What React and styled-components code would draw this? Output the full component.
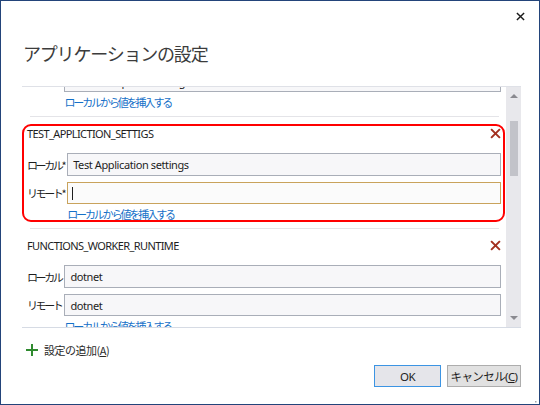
import React, { useLayoutEffect, useRef } from 'react';
import styled, { createGlobalStyle } from 'styled-components';

const GlobalStyle = createGlobalStyle`
  html, body {
    margin: 0;
    padding: 0;
    background: #ffffff;
  }
  body {
    font-family: "Noto Sans", "Noto Sans CJK JP", sans-serif;
  }
`;

const Dialog = styled.div`
  position: relative;
  width: 540px;
  height: 405px;
  box-sizing: border-box;
  border: 1px solid #23447a;
  background: #ffffff;
  display: flex;
  flex-direction: column;
  overflow: hidden;
`;

const TopBar = styled.div`
  height: 30px;
  display: flex;
  justify-content: flex-end;
  align-items: center;
  padding-right: 12px;
`;

const CloseButton = styled.button`
  width: 14px;
  height: 14px;
  padding: 0;
  border: none;
  background: none;
  display: flex;
  align-items: center;
  justify-content: center;
`;

const Title = styled.h1`
  margin: 7px 0 0 22px;
  line-height: 30px;
  font-family: "Noto Sans CJK JP", sans-serif;
  font-size: 18px;
  font-weight: 400;
  color: #3c3c3c;
  letter-spacing: -1.2px;
  white-space: nowrap;
`;

const Panel = styled.div`
  margin: 18px 18px 0 21px;
  height: 240px;
  border-top: 1px solid #dfe1e7;
  border-bottom: 1px solid #d6dbe4;
  display: flex;
`;

const Content = styled.div`
  flex: 1;
  overflow: hidden;
`;

const Scrollbar = styled.div`
  width: 15px;
  background: #e8e8ec;
  display: flex;
  flex-direction: column;
  align-items: center;
`;

const Arrow = styled.div`
  height: 17px;
  display: flex;
  align-items: center;
  justify-content: center;
`;

const Track = styled.div`
  flex: 1;
  width: 8px;
  padding-top: ${(p) => p.offset}px;
`;

const Thumb = styled.div`
  width: 8px;
  height: 55px;
  background: #c2c3c9;
`;

const Item = styled.div`
  position: relative;
  padding: 6px 5px 7px 5px;
`;

const Highlight = styled.div`
  position: absolute;
  left: 0;
  right: 1px;
  top: 7px;
  height: 94px;
  border: 2px solid #ff0000;
  border-radius: 9px;
  pointer-events: none;
`;

const Separator = styled.div`
  height: 1px;
  margin: 0 7px 0 8px;
  background: #e4e4e8;
`;

const ItemHeader = styled.div`
  height: 20px;
  display: flex;
  align-items: center;
  justify-content: space-between;
  margin-bottom: 10px;
`;

const ItemName = styled.span`
  font-size: 11px;
  color: #1e1e1e;
  letter-spacing: -0.6px;
`;

const DeleteButton = styled.button`
  width: 13px;
  height: 13px;
  padding: 0;
  margin-right: -1px;
  border: none;
  background: none;
  display: flex;
  align-items: center;
  justify-content: center;
`;

const Fields = styled.div`
  display: grid;
  grid-template-columns: auto 1fr;
  grid-template-rows: 23px 22px auto;
  column-gap: 3px;
  row-gap: 6px;
  align-items: center;
`;

const Label = styled.label`
  font-family: "Noto Sans CJK JP", sans-serif;
  font-size: 11px;
  color: #1e1e1e;
  letter-spacing: -2.4px;
  white-space: nowrap;
`;

const Input = styled.div`
  box-sizing: border-box;
  height: 100%;
  border: 1px solid ${(p) => (p.focused ? '#c9a35c' : '#a9aeb8')};
  background: ${(p) => (p.focused ? '#fbfbfb' : '#f7f7f9')};
  padding-left: 5px;
  display: flex;
  align-items: center;
  font-size: 11px;
  letter-spacing: -0.4px;
  color: #1e1e1e;
  white-space: nowrap;
  overflow: hidden;
`;

const Caret = styled.span`
  width: 1px;
  height: 13px;
  background: #1e1e1e;
  margin-left: -1px;
`;

const InsertLink = styled.a`
  grid-column: 2;
  margin-top: -3px;
  line-height: 14px;
  font-family: "Noto Sans CJK JP", sans-serif;
  font-size: 11px;
  letter-spacing: -2.1px;
  color: #1570c8;
  text-decoration: none;
  cursor: pointer;
  white-space: nowrap;
`;

const AddRow = styled.div`
  margin: 12px 0 0 25px;
  height: 20px;
  display: flex;
  align-items: center;
  gap: 6px;
`;

const AddText = styled.span`
  font-family: "Noto Sans CJK JP", sans-serif;
  font-size: 11px;
  letter-spacing: -0.5px;
  color: #2a2a2a;
`;

const ButtonRow = styled.div`
  margin: 5px 18px 0 0;
  display: flex;
  justify-content: flex-end;
  gap: 6px;
`;

const Button = styled.button`
  box-sizing: border-box;
  width: ${(p) => p.w}px;
  height: 22px;
  padding: 0;
  border: 1px solid ${(p) => (p.primary ? '#3c94e3' : '#adadad')};
  background: ${(p) => (p.primary ? '#e5e5ea' : '#e1e1e1')};
  font-family: "Noto Sans", "Noto Sans CJK JP", sans-serif;
  font-size: 11.5px;
  color: #1e1e1e;
  letter-spacing: -0.6px;
`;

const Grip = styled.div`
  position: absolute;
  right: 2px;
  bottom: 2px;
  width: 10px;
  height: 10px;
`;

const Cross = ({ size, color, width }) => (
  <svg width={size} height={size} viewBox="0 0 10 10">
    <path d="M1 1 L9 9 M9 1 L1 9" stroke={color} strokeWidth={width} fill="none" />
  </svg>
);

const settings = [
  { name: 'AzureWebJobsStorage', local: 'UseDevelopmentStorage=true', remote: 'UseDevelopmentStorage=true' },
  { name: 'TEST_APPLICTION_SETTIGS', local: 'Test Application settings', remote: '', required: true, highlight: true },
  { name: 'FUNCTIONS_WORKER_RUNTIME', local: 'dotnet', remote: 'dotnet' },
];

const SettingItem = ({ setting }) => {
  const mark = setting.required ? '*' : '';
  return (
    <Item>
      {setting.highlight && <Highlight />}
      <ItemHeader>
        <ItemName>{setting.name}</ItemName>
        <DeleteButton>
          <Cross size={11} color="#a3301f" width={1.8} />
        </DeleteButton>
      </ItemHeader>
      <Fields>
        <Label>ローカル{mark}</Label>
        <Input>{setting.local}</Input>
        <Label>リモート{mark}</Label>
        <Input focused={setting.highlight}>
          {setting.highlight ? <Caret /> : setting.remote}
        </Input>
        <InsertLink>ローカルから値を挿入する</InsertLink>
      </Fields>
    </Item>
  );
};

const App = () => {
  const contentRef = useRef(null);

  useLayoutEffect(() => {
    if (contentRef.current) {
      contentRef.current.scrollTop = 82;
    }
  }, []);

  return (
    <>
      <GlobalStyle />
      <Dialog>
        <TopBar>
          <CloseButton>
            <Cross size={9} color="#1a1a1a" width={1.6} />
          </CloseButton>
        </TopBar>
        <Title>アプリケーションの設定</Title>
        <Panel>
          <Content ref={contentRef}>
            {settings.map((s, i) => (
              <React.Fragment key={s.name}>
                {i > 0 && <Separator />}
                <SettingItem setting={s} />
              </React.Fragment>
            ))}
          </Content>
          <Scrollbar>
            <Arrow>
              <svg width="8" height="5" viewBox="0 0 8 5">
                <path d="M0 5 L4 1 L8 5 Z" fill="#8a8a90" />
              </svg>
            </Arrow>
            <Track offset={17}>
              <Thumb />
            </Track>
            <Arrow>
              <svg width="8" height="5" viewBox="0 0 8 5">
                <path d="M0 0 L4 4 L8 0 Z" fill="#8a8a90" />
              </svg>
            </Arrow>
          </Scrollbar>
        </Panel>
        <AddRow>
          <svg width="12" height="12" viewBox="0 0 12 12">
            <path d="M6 0 V12 M0 6 H12" stroke="#2f8a2f" strokeWidth="2" fill="none" />
          </svg>
          <AddText>設定の追加(<u>A</u>)</AddText>
        </AddRow>
        <ButtonRow>
          <Button primary w={67}>OK</Button>
          <Button w={74}>キャンセル(<u>C</u>)</Button>
        </ButtonRow>
        <Grip>
          <svg width="10" height="10" viewBox="0 0 10 10">
            {[[8, 2], [8, 5], [5, 5], [8, 8], [5, 8], [2, 8]].map(([x, y]) => (
              <rect key={`${x}-${y}`} x={x} y={y} width="1.5" height="1.5" fill="#a0a4ac" />
            ))}
          </svg>
        </Grip>
      </Dialog>
    </>
  );
};

export default App;
